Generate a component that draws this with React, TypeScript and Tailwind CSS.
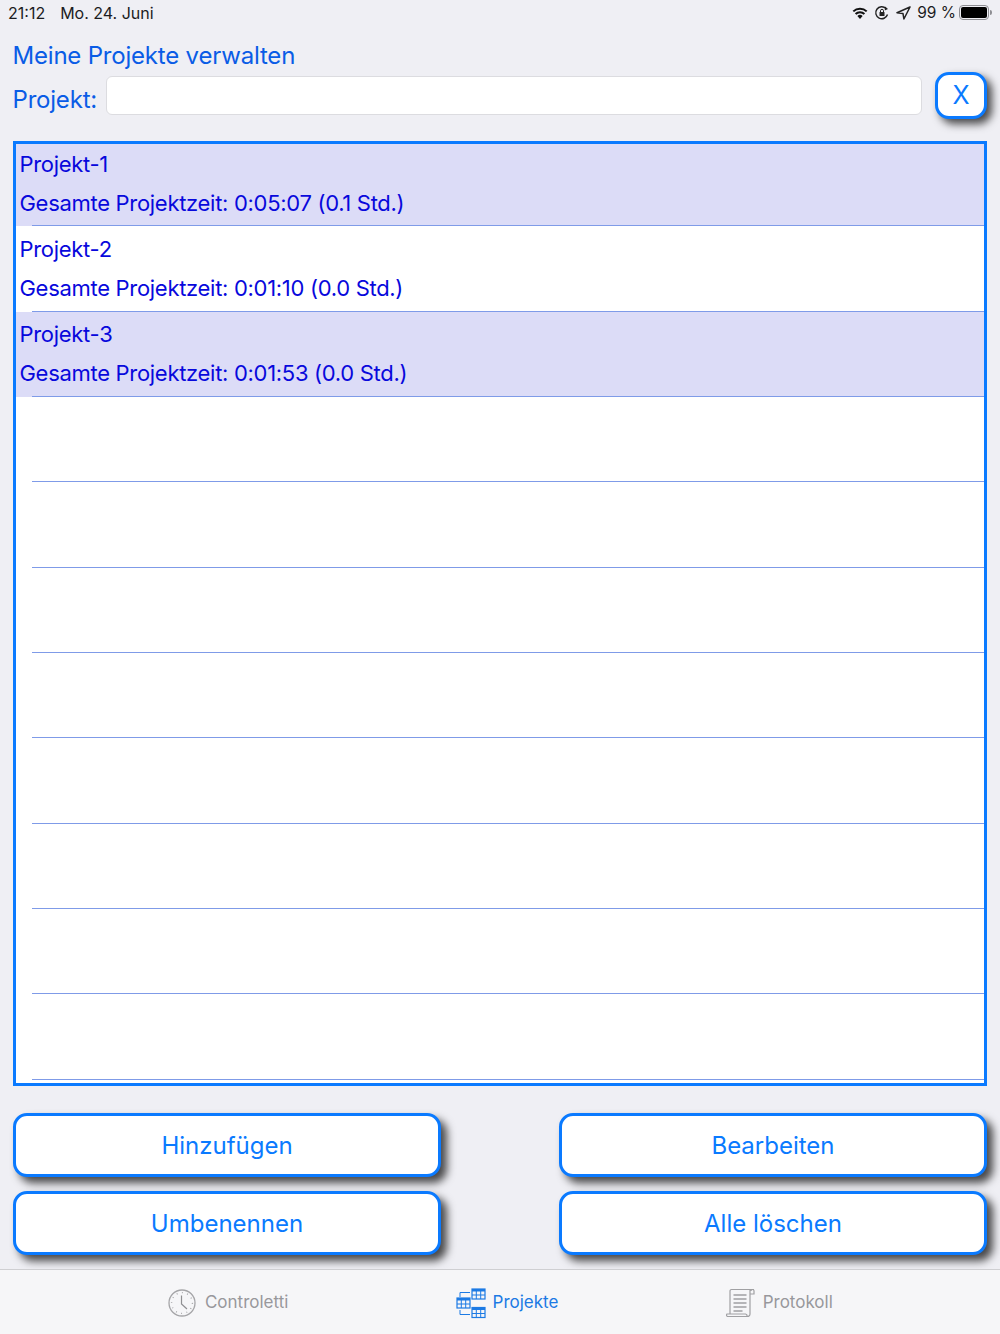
const font = { fontFamily: "Inter, 'Liberation Sans', sans-serif" };

function Row({ title, sub, selected }: { title?: string; sub?: string; selected?: boolean }) {
  return (
    <div className={`relative h-[85.35px] shrink-0 pl-[3.5px] ${selected ? "bg-[#dcdcf7]" : "bg-white"}`}>
      {title && (
        <>
          <div className="pt-[8.7px] h-[47.7px] text-[22px] leading-[28px] tracking-[-0.3px] text-[#0808dc]">{title}</div>
          <div className="text-[22px] leading-[28px] tracking-[-0.3px] text-[#0808dc]">{sub}</div>
        </>
      )}
      <div className="absolute left-[16px] right-0 bottom-0 h-px bg-[#7f9be8]" />
    </div>
  );
}

function Btn({ label }: { label: string }) {
  return (
    <button className="w-[428px] h-[64px] pt-[2px] rounded-[14px] border-[3px] border-[#0a7aff] bg-white text-[24px] text-[#0a7aff] shadow-[6px_6px_9px_rgba(0,0,0,0.7)]">
      {label}
    </button>
  );
}

function Grid({ x, y }: { x: number; y: number }) {
  return (
    <g>
      <rect x={x} y={y} width="13" height="10" fill="none" stroke="#1c7ae4" strokeWidth="1.2" />
      <rect x={x} y={y} width="13" height="2.5" fill="#1c7ae4" />
      <path d={`M${x + 4.3} ${y}v10M${x + 8.7} ${y}v10M${x} ${y + 6}h13`} stroke="#1c7ae4" strokeWidth="1" />
    </g>
  );
}

export default function App() {
  return (
    <div style={font} className="w-[1000px] h-[1334px] bg-[#efeff4] flex flex-col overflow-hidden">
      <div className="h-[27px] shrink-0 pl-[8px] pr-[8px] pb-[2px] flex items-center justify-between text-[16px] text-[#1c1c1e]">
        <div className="flex gap-[15px] leading-[26px]">
          <span>21:12</span>
          <span>Mo. 24. Juni</span>
        </div>
        <div className="flex items-center gap-[5px]">
          <svg width="18" height="14" viewBox="0 0 18 14">
            <path d="M9 13l-2.6-3a3.6 3.6 0 0 1 5.2 0z" fill="#111" />
            <path d="M4.6 8a6.2 6.2 0 0 1 8.8 0M2.3 5.4a9.6 9.6 0 0 1 13.4 0" fill="none" stroke="#111" strokeWidth="2" />
          </svg>
          <svg width="16" height="16" viewBox="0 0 16 16">
            <path d="M13.5 9.5A6 6 0 1 1 12 3.5" fill="none" stroke="#222" strokeWidth="1.4" />
            <path d="M11 1.5l3 2.5-3.2 1.5z" fill="#222" />
            <rect x="5.5" y="7" width="5" height="4" rx="0.5" fill="#222" />
            <path d="M6.5 7V5.8a1.5 1.5 0 0 1 3 0V7" fill="none" stroke="#222" />
          </svg>
          <svg width="15" height="14" viewBox="0 0 15 14" className="ml-[1px]">
            <path d="M14 1L1 6.8l6 .8.9 5.4z" fill="none" stroke="#222" strokeWidth="1.5" strokeLinejoin="round" />
          </svg>
          <span className="ml-[1px] -mr-[2px] text-[15.5px] whitespace-nowrap">99 %</span>
          <div className="flex items-center">
            <div className="w-[30px] h-[15px] rounded-[4px] border border-[#8e8e93] p-px">
              <div className="w-[26px] h-full rounded-[2px] bg-black" />
            </div>
            <div className="w-[2px] h-[5px] ml-px rounded-r bg-[#8e8e93]" />
          </div>
        </div>
      </div>

      <div className="pl-[12.5px] pt-[13px] text-[24px] leading-[32px] tracking-[-0.2px] text-[#0a5ce6]">Meine Projekte verwalten</div>

      <div className="flex items-start pl-[13px] pr-[13px] h-[50px]">
        <span className="-ml-[0.5px] text-[24px] leading-[32px] tracking-[-0.2px] text-[#0a5ce6] w-[93.5px] mt-[11.5px]">Projekt:</span>
        <div className="w-[816px] h-[39px] mt-[4px] rounded-[6px] bg-white border border-[#dcdce0]" />
        <button className="ml-[13px] w-[52px] h-[47px] rounded-[14px] border-[3px] border-[#0a7aff] bg-white text-[25px] text-[#0a7aff] shadow-[5px_5px_9px_rgba(0,0,0,0.7)]">
          X
        </button>
      </div>

      <div className="mx-[13px] mt-[19px] h-[945px] shrink-0 border-[3px] border-[#0a7aff] bg-white flex flex-col overflow-hidden">
        <div className="-mt-[3px] flex flex-col">
          <Row title="Projekt-1" sub="Gesamte Projektzeit: 0:05:07 (0.1 Std.)" selected />
          <Row title="Projekt-2" sub="Gesamte Projektzeit: 0:01:10 (0.0 Std.)" />
          <Row title="Projekt-3" sub="Gesamte Projektzeit: 0:01:53 (0.0 Std.)" selected />
          <Row />
          <Row />
          <Row />
          <Row />
          <Row />
          <Row />
          <Row />
          <Row />
        </div>
      </div>

      <div className="px-[13px] pt-[27px] grid grid-cols-[428px_428px] justify-between gap-y-[14px]">
        <Btn label="Hinzufügen" />
        <Btn label="Bearbeiten" />
        <Btn label="Umbenennen" />
        <Btn label="Alle löschen" />
      </div>

      <div className="mt-[14px] flex-1 pt-[2px] border-t border-[#cfcfd2] bg-[#f6f6f8] flex items-center text-[17px]">
        <div className="w-[1000px] grid grid-cols-3">
          <div className="flex items-center justify-end gap-[9px] pr-[45px] text-[#98989c]">
            <svg width="28" height="28" viewBox="0 0 28 28">
              <circle cx="14" cy="14" r="13" fill="none" stroke="#a5a5a8" strokeWidth="1.3" />
              <circle cx="14" cy="14" r="10.4" fill="none" stroke="#a5a5a8" strokeWidth="1.4" strokeDasharray="0.9 4.5" />
              <path d="M13.5 6.5V15l5.5 5" fill="none" stroke="#8f8f92" strokeWidth="1.2" />
            </svg>
            <span>Controletti</span>
          </div>
          <div className="flex items-center justify-center gap-[7px] pl-[14px] text-[#1c7ae4]">
            <svg width="30" height="31" viewBox="0 0 30 31">
              <Grid x={16} y={1} />
              <Grid x={1} y={10} />
              <Grid x={16} y={19.5} />
              <path d="M4 9V4.5h10M4 22v4.5h10" fill="none" stroke="#1c7ae4" strokeWidth="1" />
            </svg>
            <span>Projekte</span>
          </div>
          <div className="flex items-center gap-[8px] pl-[59px] text-[#98989c]">
            <svg width="29" height="30" viewBox="0 0 29 30">
              <path d="M4 26V3a1.5 1.5 0 0 1 1.5-1.5H28" fill="none" stroke="#a0a0a3" strokeWidth="1.2" />
              <path d="M24 1.5V26a2.5 2.5 0 0 1-2.5 2.5H1.5A1.5 1.5 0 0 1 1 26h18.5a2 2 0 0 1 1.5 2.5M24 6h4V3a1.5 1.5 0 0 0-3 0" fill="none" stroke="#a0a0a3" strokeWidth="1.2" />
              <path d="M7.5 7h13M7.5 11h13M7.5 15h13M7.5 19h13M7.5 23h9" stroke="#a0a0a3" strokeWidth="1.4" />
            </svg>
            <span>Protokoll</span>
          </div>
        </div>
      </div>
    </div>
  );
}
